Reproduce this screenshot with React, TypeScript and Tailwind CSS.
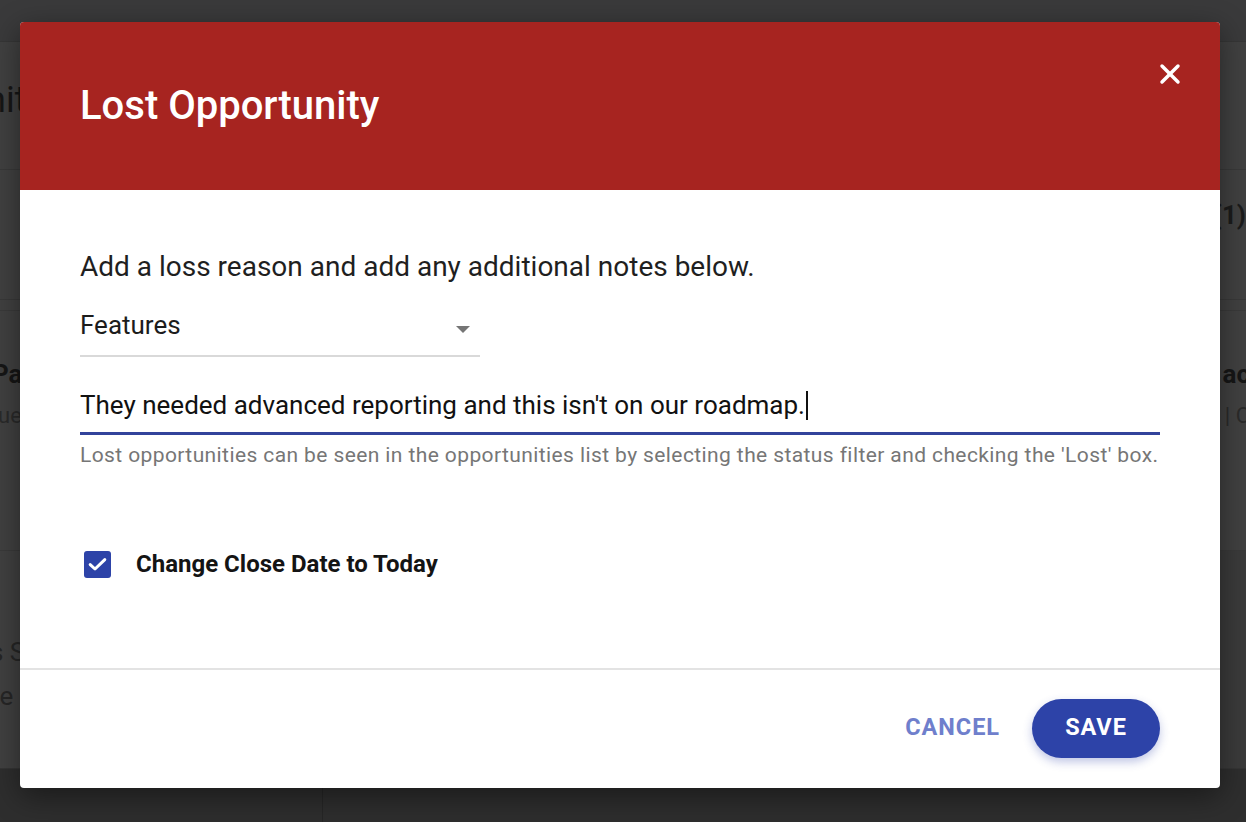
import { X } from 'lucide-react';

const font = { fontFamily: 'Roboto, "Liberation Sans", sans-serif' };

function Backdrop() {
  // dimmed opportunity page behind the dialog
  return (
    <div className="h-[822px] w-full overflow-hidden bg-[#414141] text-[#161616]" style={font}>
      <div className="h-[42px] border-b border-[#363636] bg-[#3a3a3b]" />
      <div className="h-[128px] border-b border-[#393939] pt-[40px]">
        <div className="-ml-[14px] text-[36px] leading-none">nit</div>
      </div>
      <div className="flex h-[130px] items-start justify-end border-b border-[#393939] pt-[32px]">
        <div className="text-[26px] font-bold leading-none text-[#1b1b1b]">(1)</div>
      </div>
      <div className="mt-[10px] flex h-[220px] justify-between border-t border-[#3a3a3a] pt-[50px]">
        <div className="-ml-[8px]">
          <div className="text-[26px] font-bold leading-none">Pa</div>
          <div className="ml-[6px] mt-[18px] text-[22px] leading-none text-[#2a2a2a]">ue</div>
        </div>
        <div className="-mr-[4px] text-right">
          <div className="text-[26px] font-bold leading-none">ac</div>
          <div className="mt-[18px] text-[22px] leading-none text-[#2a2a2a]">s | C</div>
        </div>
      </div>
      <div className="mt-[20px] flex h-[218px] border-t border-[#3a3a3a]">
        <div className="w-[323px] border-r border-[#3a3a3a] pt-[88px]">
          <div className="-ml-[10px] text-[26px] leading-none text-[#262626]">s S</div>
          <div className="-ml-[14px] mt-[18px] text-[26px] leading-none text-[#262626]">ce</div>
        </div>
        <div className="flex-1 bg-[#3b3b3b]" />
      </div>
      <div className="flex h-[60px] border-t border-[#353535] bg-[#2e2e2e]">
        <div className="w-[323px] border-r border-[#262626]" />
        <div className="flex-1" />
      </div>
    </div>
  );
}

export default function App() {
  return (
    <div className="relative h-[822px] w-[1246px] overflow-hidden" style={font}>
      <Backdrop />

      {/* Lost opportunity dialog */}
      <div className="absolute left-[20px] top-[22px] flex h-[766px] w-[1200px] flex-col overflow-hidden rounded-[4px] bg-white shadow-[0_8px_30px_rgba(0,0,0,0.45)]">
        <div className="relative h-[168px] shrink-0 bg-[#a72420] pl-[60px] pt-[64px]">
          <h2 className="text-[40px] font-medium leading-[40px] text-white">Lost Opportunity</h2>
          <button className="absolute right-[34px] top-[36px] text-white">
            <X size={32} strokeWidth={2.6} />
          </button>
        </div>

        <div className="flex-1 px-[60px] pt-[61px]">
          <p className="text-[28px] leading-[32px] text-[#1f1f1f]">
            Add a loss reason and add any additional notes below.
          </p>

          <div className="mt-[27px] flex h-[47px] w-[400px] items-start justify-between border-b-2 border-[#d9d9d9]">
            <span className="text-[26px] leading-[30px] text-[#1c1c1c]">Features</span>
            <svg width="14" height="8" viewBox="0 0 14 8" className="mr-[10px] mt-[16px]">
              <path d="M0 0 L14 0 L7 7 Z" fill="#757575" />
            </svg>
          </div>

          <div className="mt-[33px] flex h-[45px] items-start border-b-[3px] border-[#32439b]">
            <span className="text-[26px] leading-[30px] text-[#111]">
              They needed advanced reporting and this isn't on our roadmap.
            </span>
            <span className="ml-[1px] mt-[1px] h-[29px] w-[2px] bg-[#111]" />
          </div>
          <p className="mt-[8px] whitespace-nowrap text-[21px] leading-[24px] tracking-[0.4px] text-[#767676]">
            Lost opportunities can be seen in the opportunities list by selecting the status filter and checking the 'Lost' box.
          </p>

          <label className="mt-[82px] flex items-center">
            <span className="ml-[4px] flex h-[27px] w-[27px] items-center justify-center rounded-[3px] bg-[#2d43a8]">
              <svg width="19" height="15" viewBox="0 0 19 15">
                <path d="M2.2 7.6 L7 12 L16.8 2.6" fill="none" stroke="white" strokeWidth="3" strokeLinecap="round" strokeLinejoin="round" />
              </svg>
            </span>
            <span className="ml-[25px] text-[24px] font-bold leading-[30px] text-[#141414]">Change Close Date to Today</span>
          </label>
        </div>

        <div className="flex h-[120px] shrink-0 items-center justify-end gap-[32px] border-t-2 border-[#e3e3e3] pb-[2px] pr-[60px]">
          <button className="text-[23.5px] font-bold tracking-[0.04em] text-[#6f7fcc]">CANCEL</button>
          <button className="h-[59px] w-[128px] rounded-full bg-[#2d43a8] text-[23.5px] font-bold tracking-[0.04em] text-white shadow-[0_4px_10px_rgba(45,67,168,0.3)]">
            SAVE
          </button>
        </div>
      </div>
    </div>
  );
}
